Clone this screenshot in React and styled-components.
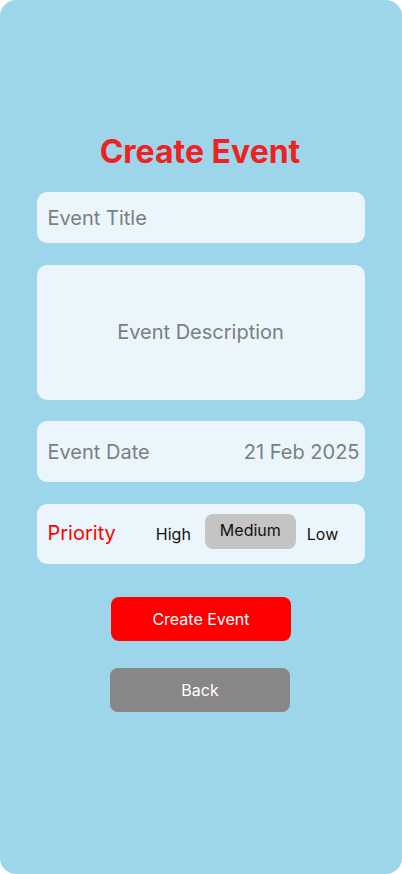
import React, { useState } from 'react';
import styled, { createGlobalStyle } from 'styled-components';

const GlobalStyle = createGlobalStyle`
	html, body {
		margin: 0;
		padding: 0;
		background: #ffffff;
	}
	body {
		font-family: 'Inter', 'Liberation Sans', sans-serif;
	}
`;

export default function App () {
	const [priority, setPriority] = useState('Medium');

	return (
		<>
			<GlobalStyle/>
			<Screen>
				<Title>Create Event</Title>
				<Form>
					<Field height="51px">
						<Placeholder>Event Title</Placeholder>
					</Field>
					<Field height="135px" center>
						<Placeholder>Event Description</Placeholder>
					</Field>
					<Field height="61px" spread>
						<Placeholder>Event Date</Placeholder>
						<Placeholder>21 Feb 2025</Placeholder>
					</Field>
					<Field height="60px">
						<PriorityLabel>Priority</PriorityLabel>
						<Options>
							{['High', 'Medium', 'Low'].map(p => (
								<Option key={p} $active={priority === p} onClick={() => setPriority(p)}>
									{p}
								</Option>
							))}
						</Options>
					</Field>
				</Form>
				<Buttons>
					<Button $bg="#ff0000">Create Event</Button>
					<Button $bg="#888686" $shift="2px">Back</Button>
				</Buttons>
			</Screen>
		</>
	);
}

const Screen = styled.div`
	width: 402px;
	height: 874px;
	box-sizing: border-box;
	background-color: #9dd6ea;
	border-radius: 16px;
	display: flex;
	flex-direction: column;
	align-items: center;
	padding-top: 130px;
`;

const Title = styled.h1`
	margin: 0;
	font-family: 'Inter', 'Liberation Sans', sans-serif;
	font-weight: 700;
	font-size: 32px;
	line-height: 44px;
	color: #ee2222;
	margin-right: 2px;
`;

const Form = styled.div`
	display: flex;
	flex-direction: column;
	gap: 21.5px;
	width: 328px;
	margin-top: 18px;
	margin-right: 1px;
`;

const Field = styled.div`
	height: ${p => p.height};
	box-sizing: border-box;
	background-color: #eaf6fb;
	border-radius: 10px;
	display: flex;
	align-items: center;
	justify-content: ${p => p.center ? 'center' : p.spread ? 'space-between' : 'flex-start'};
	padding: ${p => p.center ? '0' : '0 5px 0 11px'};
`;

const Placeholder = styled.span`
	font-size: 20px;
	color: #7a7f80;
`;

const PriorityLabel = styled.span`
	font-size: 20px;
	color: #ff0000;
	margin-bottom: 2px;
`;

const Options = styled.div`
	display: flex;
	align-items: center;
	gap: 13px;
	margin-left: 40px;
`;

const Option = styled.button`
	border: none;
	font-family: 'Inter', 'Liberation Sans', sans-serif;
	font-size: 16px;
	color: #111111;
	height: 35px;
	padding: 0 ${p => p.$active ? '15px' : '0'};
	border-radius: 8px;
	background: ${p => p.$active ? '#c4c4c4' : 'transparent'};
	cursor: pointer;
	padding-bottom: ${p => p.$active ? '4px' : '0'};
	margin: ${p => p.$active ? '-4px -2px 0 1px' : '0'};
`;

const Buttons = styled.div`
	display: flex;
	flex-direction: column;
	align-items: center;
	gap: 27px;
	margin-top: 33px;
`;

const Button = styled.button`
	width: 180px;
	height: 44px;
	border: none;
	border-radius: 8px;
	background-color: ${p => p.$bg};
	color: #ffffff;
	font-family: 'Inter', 'Liberation Sans', sans-serif;
	font-size: 16px;
	margin-right: ${p => p.$shift || '0'};
	cursor: pointer;
`;
